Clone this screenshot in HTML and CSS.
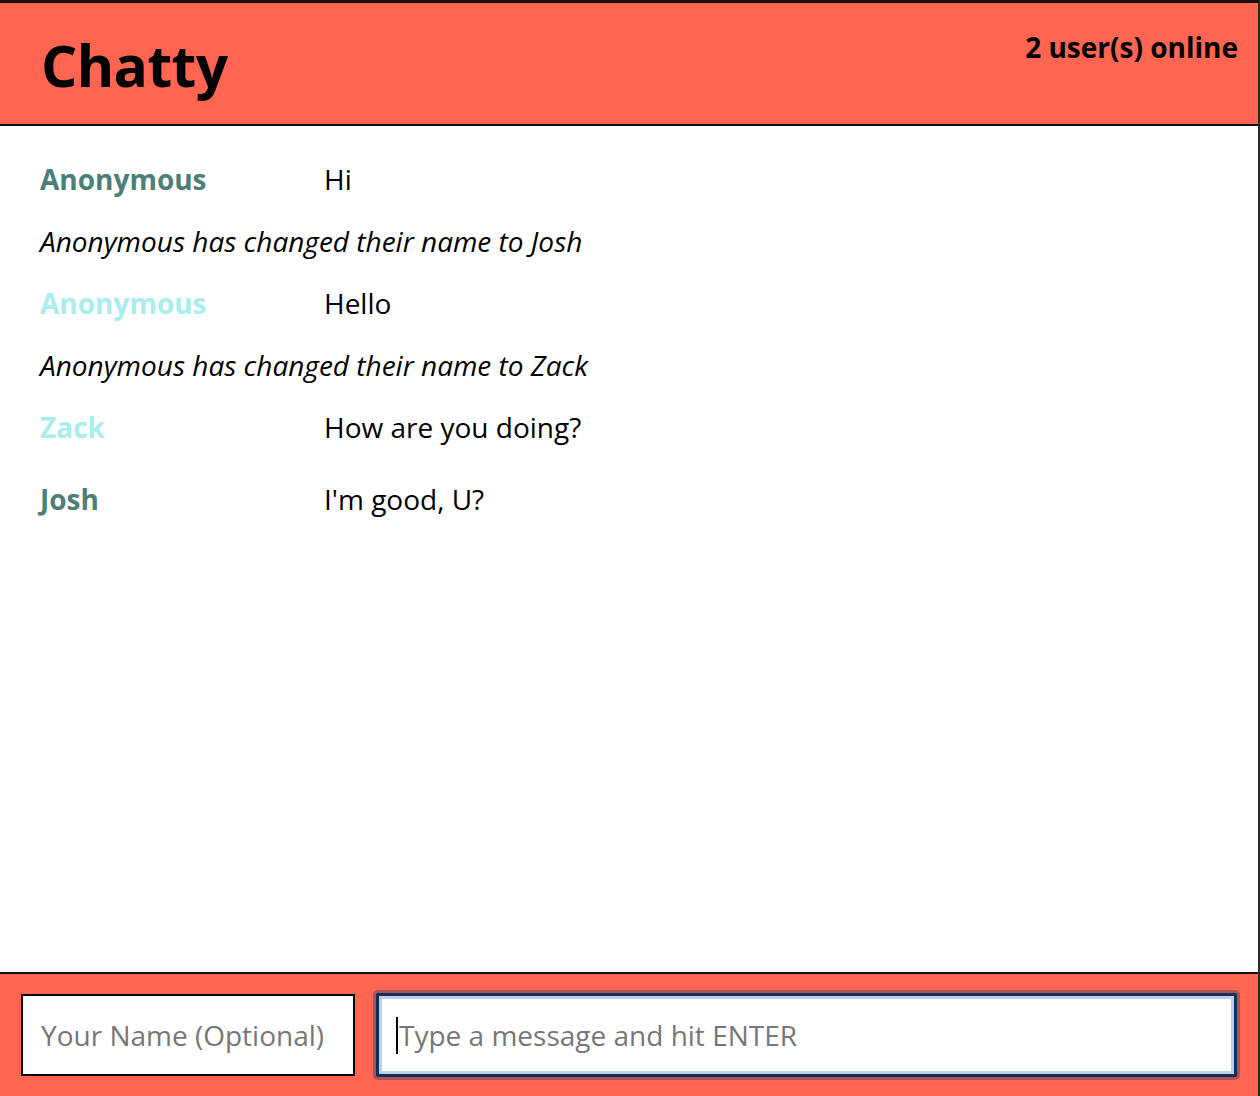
FILE: index.html
```html
<!DOCTYPE html>
<html>
<head>
<meta charset="utf-8">
<link rel="stylesheet" href="styles.css">
</head>
<body>
<div class="app">
  <nav class="navbar">
    <span class="brand">Chatty</span>
    <span class="counter">2 user(s) online</span>
  </nav>
  <main class="messages">
    <div class="message">
      <span class="username dark">Anonymous</span>
      <span class="content">Hi</span>
    </div>
    <div class="message system">Anonymous has changed their name to Josh</div>
    <div class="message">
      <span class="username light">Anonymous</span>
      <span class="content">Hello</span>
    </div>
    <div class="message system">Anonymous has changed their name to Zack</div>
    <div class="message">
      <span class="username light">Zack</span>
      <span class="content">How are you doing?</span>
    </div>
    <div class="message tall">
      <span class="username dark">Josh</span>
      <span class="content">I'm good, U?</span>
    </div>
  </main>
  <footer class="chatbar">
    <input class="field name" placeholder="Your Name (Optional)">
    <div class="msg-wrap">
      <input class="field msg" placeholder="Type a message and hit ENTER">
    </div>
  </footer>
</div>
</body>
</html>
```
FILE: styles.css
```css
html, body {
  margin: 0;
  padding: 0;
  height: 100%;
}
body {
  font-family: "Open Sans", sans-serif;
  background: #fff;
}
.app {
  height: 1096px;
  display: flex;
  flex-direction: column;
  border-top: 3px solid #111;
  border-right: 2px solid #2a2a2a;
  box-sizing: border-box;
}
.navbar {
  height: 123px;
  flex: none;
  box-sizing: border-box;
  background: #ff6550;
  border-bottom: 2px solid #111;
  display: flex;
  justify-content: space-between;
  align-items: flex-start;
  padding: 0 20px 0 41px;
}
.brand {
  font-size: 57px;
  font-weight: 700;
  line-height: 1;
  margin-top: 34px;
  letter-spacing: -0.6px;
  color: #000;
}
.counter {
  font-size: 28px;
  font-weight: 700;
  line-height: 1;
  margin-top: 30px;
  color: #000;
}
.messages {
  flex: 1;
  padding: 22px 40px 0 40px;
}
.message {
  display: flex;
  align-items: flex-start;
  font-size: 28px;
  line-height: 62px;
  height: 62px;
}
.message.tall {
  height: 82px;
  line-height: 82px;
}
.username {
  width: 284px;
  font-weight: 700;
  flex: none;
}
.username.dark { color: #4c8077; }
.username.light { color: #a9eeec; }
.content { color: #000; }
.system {
  font-style: italic;
  color: #000;
}
.chatbar {
  height: 124px;
  flex: none;
  box-sizing: border-box;
  background: #ff6550;
  border-top: 2px solid #111;
  display: flex;
  align-items: center;
  gap: 21px;
  padding: 0 21px 0 21px;
}
.field {
  font-family: "Open Sans", sans-serif;
  font-size: 28px;
  height: 82px;
  box-sizing: border-box;
  border: 2px solid #000;
  background: #fff;
  padding: 0 18px;
  outline: none;
  caret-color: transparent;
}
.field::placeholder { color: #777; }
.field.name { width: 334px; }
.msg-wrap {
  flex: 1;
  position: relative;
  display: flex;
}
.msg-wrap::after {
  content: "";
  position: absolute;
  left: 20px;
  top: 24px;
  width: 2px;
  height: 37px;
  background: #000;
}
.field.msg {
  flex: 1;
  border: 3px solid #0f2f5c;
  box-shadow: inset 0 0 0 3px #bfd0e0, 0 0 0 3px rgba(70,60,100,0.45);
  border-radius: 2px;
  height: 84px;
  padding: 0 20px;
}
```
